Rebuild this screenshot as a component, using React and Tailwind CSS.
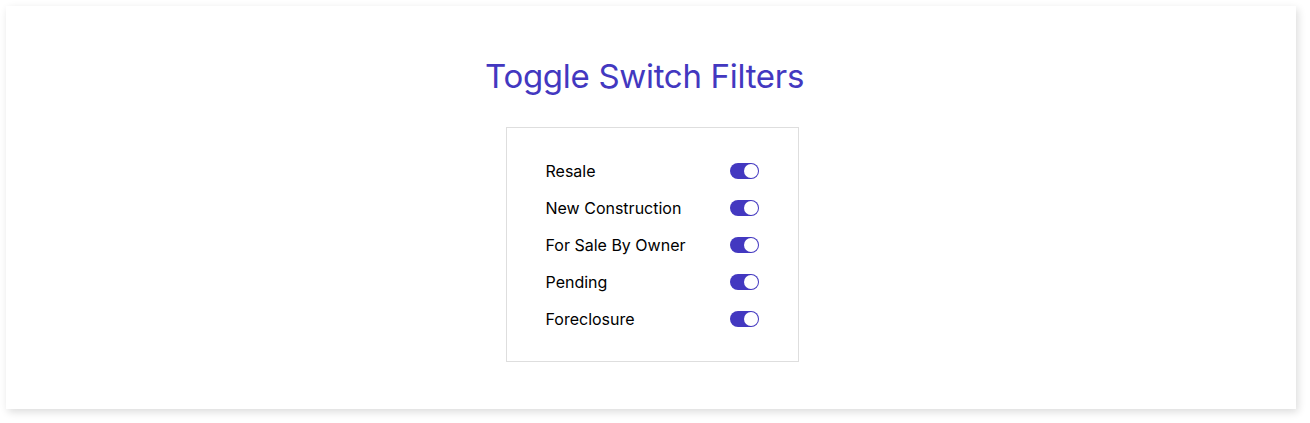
import React, { useState } from "react";

const filters = ["Resale", "New Construction", "For Sale By Owner", "Pending", "Foreclosure"];

function Toggle({ on, onClick }) {
  return (
    <button
      onClick={onClick}
      className={`relative w-[29px] h-[16px] rounded-full ${on ? "bg-[#4338c0]" : "bg-gray-300"}`}
    >
      <span
        className={`absolute top-[1px] w-[14px] h-[14px] rounded-full bg-white ${on ? "left-[14px]" : "left-[1px]"}`}
      />
    </button>
  );
}

function App() {
  const [state, setState] = useState(filters.map(() => true));

  const flip = (i) => {
    const next = [...state];
    next[i] = !next[i];
    setState(next);
  };

  return (
    <div className="bg-white p-[6px] w-[1310px] h-[423px]" style={{ fontFamily: "Inter, 'Noto Sans', sans-serif" }}>
      <div className="w-[1290px] h-[403px] bg-white shadow-[2px_3px_8px_rgba(0,0,0,0.14)] flex flex-col items-center pt-[49px]">
        <h1 className="mr-[13px] text-[33px] leading-[42px] text-[#4338c0] font-normal tracking-[-0.3px]">Toggle Switch Filters</h1>
        <div className="mt-[30px] ml-[2px] w-[293px] border border-[#dedede] px-[39px] py-[24px]">
          {filters.map((f, i) => (
            <div key={f} className="h-[37px] flex items-center justify-between">
              <span className="text-[16px] text-black">{f}</span>
              <Toggle on={state[i]} onClick={() => flip(i)} />
            </div>
          ))}
        </div>
      </div>
    </div>
  );
}

export default App;
